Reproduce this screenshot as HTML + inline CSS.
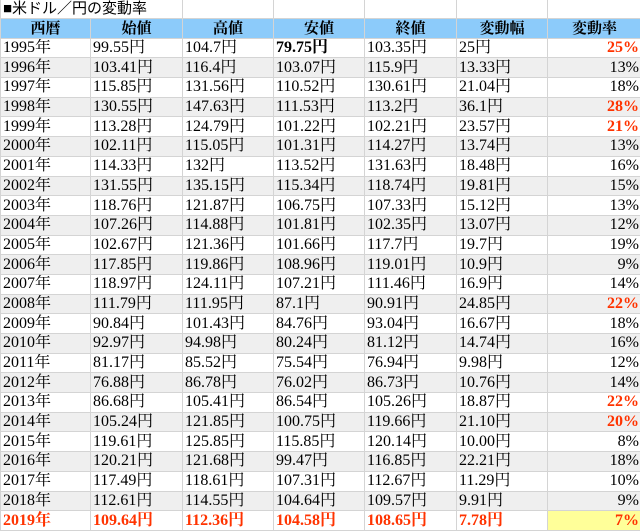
<!DOCTYPE html><html><head><meta charset="utf-8"><style>
body{margin:0;width:640px;height:529px;overflow:hidden;background:#fff;font-family:"Liberation Serif","Noto Serif CJK JP",serif;font-size:16px;color:#000}
table{border-collapse:collapse;table-layout:fixed;width:641px;position:absolute;left:0;top:0}
td{border:1px solid #d4d4d4;padding:0 0 0 2px;height:18.7px;line-height:18px;white-space:nowrap;overflow:hidden}
tr.t td{height:18px;border-top:none}
tr.t td:first-child{font-family:"Liberation Sans","Noto Sans CJK JP",sans-serif;font-size:15px}
tr.h td{background:#8ccbfa;text-align:center;font-weight:bold;font-family:"Noto Serif CJK JP",serif;font-size:15px;padding:0}
tr.g td{background:#efefef}
td:last-child{text-align:right;padding-right:2px}
.r{color:#ff3300;font-weight:bold}
tr.x td{color:#ff3300;font-weight:bold}
.y{background:#ffff99}
</style></head><body><table>
<colgroup><col style="width:90px"><col style="width:92px"><col style="width:91px"><col style="width:91px"><col style="width:92px"><col style="width:91px"><col style="width:94px"></colgroup>
<tr class="t"><td colspan="2" style="border-right:none">■米ドル／円の変動率</td><td></td><td></td><td></td><td></td><td></td></tr>
<tr class="h"><td>西暦</td><td>始値</td><td>高値</td><td>安値</td><td>終値</td><td>変動幅</td><td style="text-align:center">変動率</td></tr>
<tr><td>1995年</td><td>99.55円</td><td>104.7円</td><td><b>79.75円</b></td><td>103.35円</td><td>25円</td><td class="r">25%</td></tr>
<tr class="g"><td>1996年</td><td>103.41円</td><td>116.4円</td><td>103.07円</td><td>115.9円</td><td>13.33円</td><td>13%</td></tr>
<tr><td>1997年</td><td>115.85円</td><td>131.56円</td><td>110.52円</td><td>130.61円</td><td>21.04円</td><td>18%</td></tr>
<tr class="g"><td>1998年</td><td>130.55円</td><td>147.63円</td><td>111.53円</td><td>113.2円</td><td>36.1円</td><td class="r">28%</td></tr>
<tr><td>1999年</td><td>113.28円</td><td>124.79円</td><td>101.22円</td><td>102.21円</td><td>23.57円</td><td class="r">21%</td></tr>
<tr class="g"><td>2000年</td><td>102.11円</td><td>115.05円</td><td>101.31円</td><td>114.27円</td><td>13.74円</td><td>13%</td></tr>
<tr><td>2001年</td><td>114.33円</td><td>132円</td><td>113.52円</td><td>131.63円</td><td>18.48円</td><td>16%</td></tr>
<tr class="g"><td>2002年</td><td>131.55円</td><td>135.15円</td><td>115.34円</td><td>118.74円</td><td>19.81円</td><td>15%</td></tr>
<tr><td>2003年</td><td>118.76円</td><td>121.87円</td><td>106.75円</td><td>107.33円</td><td>15.12円</td><td>13%</td></tr>
<tr class="g"><td>2004年</td><td>107.26円</td><td>114.88円</td><td>101.81円</td><td>102.35円</td><td>13.07円</td><td>12%</td></tr>
<tr><td>2005年</td><td>102.67円</td><td>121.36円</td><td>101.66円</td><td>117.7円</td><td>19.7円</td><td>19%</td></tr>
<tr class="g"><td>2006年</td><td>117.85円</td><td>119.86円</td><td>108.96円</td><td>119.01円</td><td>10.9円</td><td>9%</td></tr>
<tr><td>2007年</td><td>118.97円</td><td>124.11円</td><td>107.21円</td><td>111.46円</td><td>16.9円</td><td>14%</td></tr>
<tr class="g"><td>2008年</td><td>111.79円</td><td>111.95円</td><td>87.1円</td><td>90.91円</td><td>24.85円</td><td class="r">22%</td></tr>
<tr><td>2009年</td><td>90.84円</td><td>101.43円</td><td>84.76円</td><td>93.04円</td><td>16.67円</td><td>18%</td></tr>
<tr class="g"><td>2010年</td><td>92.97円</td><td>94.98円</td><td>80.24円</td><td>81.12円</td><td>14.74円</td><td>16%</td></tr>
<tr><td>2011年</td><td>81.17円</td><td>85.52円</td><td>75.54円</td><td>76.94円</td><td>9.98円</td><td>12%</td></tr>
<tr class="g"><td>2012年</td><td>76.88円</td><td>86.78円</td><td>76.02円</td><td>86.73円</td><td>10.76円</td><td>14%</td></tr>
<tr><td>2013年</td><td>86.68円</td><td>105.41円</td><td>86.54円</td><td>105.26円</td><td>18.87円</td><td class="r">22%</td></tr>
<tr class="g"><td>2014年</td><td>105.24円</td><td>121.85円</td><td>100.75円</td><td>119.66円</td><td>21.10円</td><td class="r">20%</td></tr>
<tr><td>2015年</td><td>119.61円</td><td>125.85円</td><td>115.85円</td><td>120.14円</td><td>10.00円</td><td>8%</td></tr>
<tr class="g"><td>2016年</td><td>120.21円</td><td>121.68円</td><td>99.47円</td><td>116.85円</td><td>22.21円</td><td>18%</td></tr>
<tr><td>2017年</td><td>117.49円</td><td>118.61円</td><td>107.31円</td><td>112.67円</td><td>11.29円</td><td>10%</td></tr>
<tr class="g"><td>2018年</td><td>112.61円</td><td>114.55円</td><td>104.64円</td><td>109.57円</td><td>9.91円</td><td>9%</td></tr>
<tr class="x"><td>2019年</td><td>109.64円</td><td>112.36円</td><td>104.58円</td><td>108.65円</td><td>7.78円</td><td class="y">7%</td></tr>
</table></body></html>
